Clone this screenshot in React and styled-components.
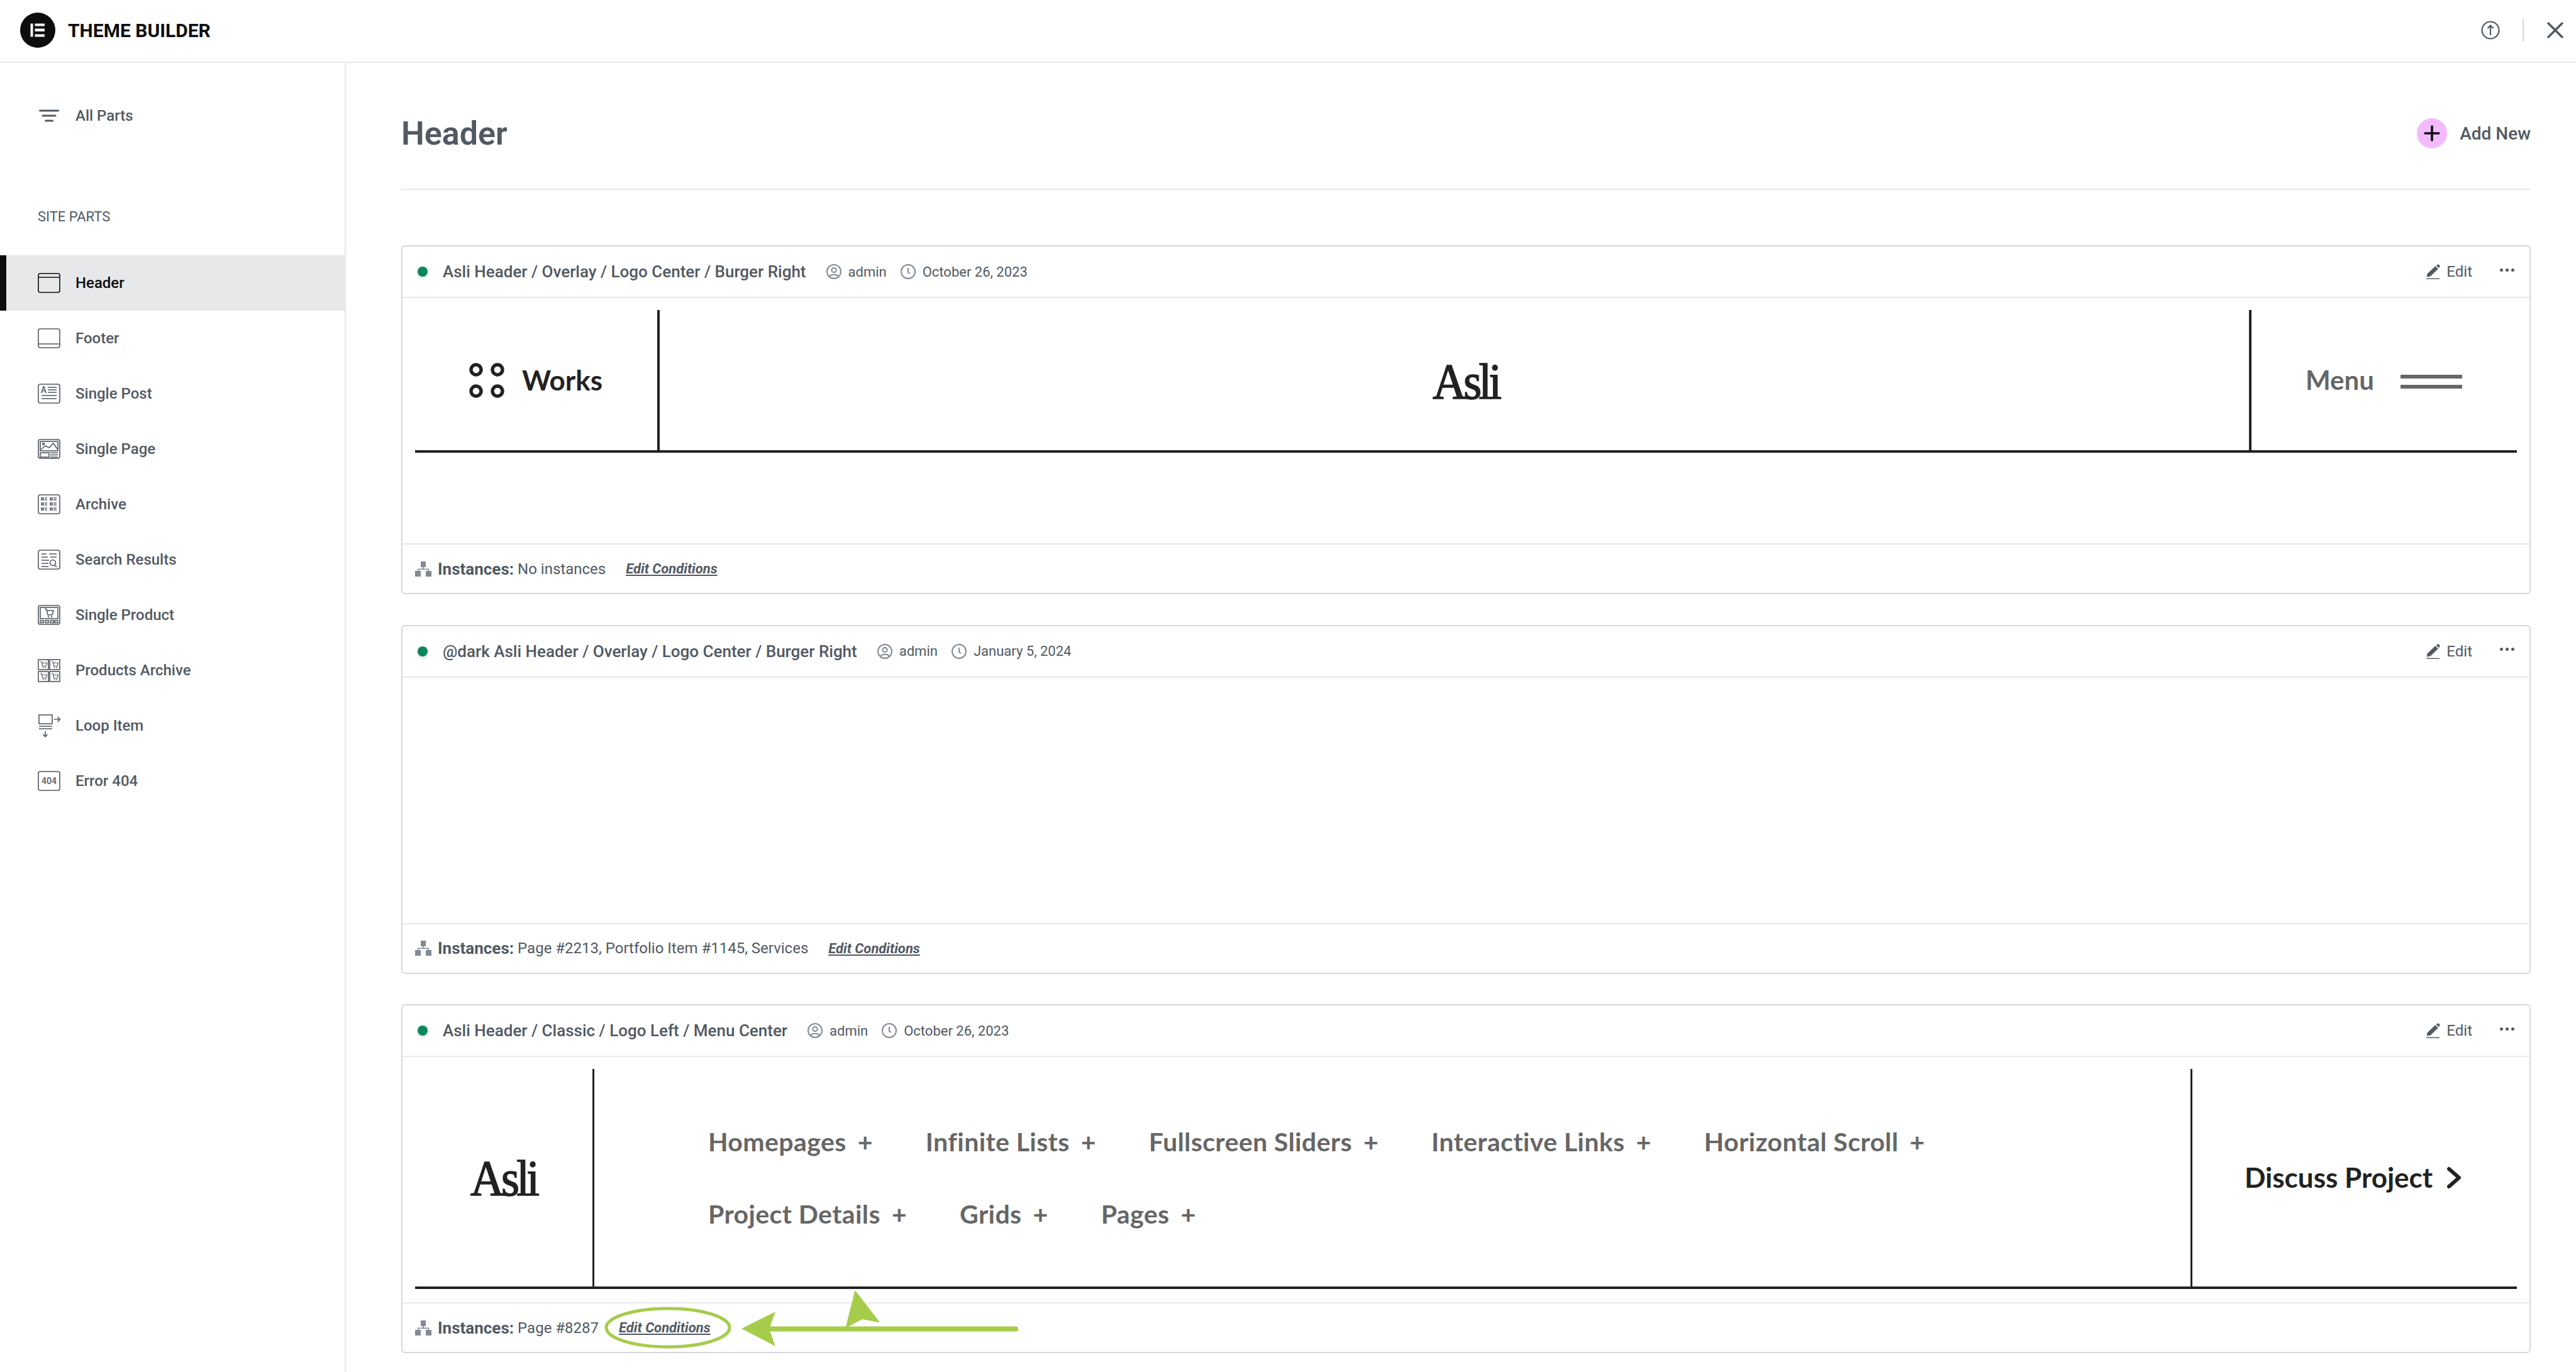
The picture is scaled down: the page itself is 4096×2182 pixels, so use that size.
import React from 'react'
import styled, { createGlobalStyle } from 'styled-components'

const GlobalStyle = createGlobalStyle`
  html, body {
    margin: 0;
    padding: 0;
    background: #fff;
    font-family: Roboto, "Liberation Sans", sans-serif;
    color: #515962;
  }
  * {
    box-sizing: border-box;
  }
`

// ICONS
const Box = () => <rect x="1" y="1" width="34" height="30" rx="3" fill="none" />

const Cart = ({ x, y, s = 1 }) => (
  <g transform={`translate(${x} ${y}) scale(${s})`} fill="none">
    <path d="M0 0 L3 1 L5 10 H12 L14 3 H3.5" />
    <circle cx="6" cy="13" r="0.5" />
    <circle cx="11" cy="13" r="0.5" />
  </g>
)

const SmallRow = ({ y }) => (
  <>
    <rect x="6" y={y} width="3" height="3" />
    <path d={`M11 ${y} h4 M11 ${y + 3} h4 M25 ${y} h5 M25 ${y + 3} h5`} />
    <rect x="20" y={y} width="3" height="3" />
  </>
)

const partIcons = {
  header: (
    <>
      <Box />
      <path d="M1 7 H35" />
    </>
  ),
  footer: (
    <>
      <Box />
      <path d="M1 25 H35" />
    </>
  ),
  post: (
    <>
      <Box />
      <text x="9.5" y="15" textAnchor="middle" fontSize="14" fontFamily="Roboto, sans-serif" fill="#515962" stroke="none">
        A
      </text>
      <path d="M16 6 H30 M16 10 H30 M16 14 H30 M6 19 H30 M6 24 H30" />
    </>
  ),
  page: (
    <>
      <Box />
      <rect x="4" y="4" width="28" height="15" />
      <circle cx="9" cy="8" r="1.5" />
      <path d="M5 17 L12 11 L18 14 L25 7 L31 16" />
      <rect x="4" y="22" width="14" height="7" />
      <path d="M20 22 H32 M20 25.5 H32 M20 29 H32" />
    </>
  ),
  archive: (
    <>
      <Box />
      <SmallRow y={6} />
      <SmallRow y={14} />
      <SmallRow y={22} />
    </>
  ),
  search: (
    <>
      <Box />
      <path d="M6 7 H14 M18 7 H30 M6 12 H16 M20 12 H30 M6 17 H18 M6 22 H17 M6 27 H17" />
      <circle cx="24" cy="21" r="4.5" />
      <path d="M27 24.5 L30 28" />
    </>
  ),
  product: (
    <>
      <Box />
      <rect x="4" y="4" width="28" height="18" />
      <Cart x={11} y={6} />
      <rect x="4" y="25" width="5" height="3.5" />
      <rect x="12" y="25" width="5" height="3.5" />
      <rect x="20" y="25" width="5" height="3.5" />
      <rect x="27" y="25" width="5" height="3.5" />
    </>
  ),
  products: (
    <>
      <rect x="1" y="1" width="16" height="16" fill="none" />
      <rect x="19" y="1" width="16" height="16" fill="none" />
      <rect x="1" y="20" width="16" height="16" fill="none" />
      <rect x="19" y="20" width="16" height="16" fill="none" />
      <Cart x={4} y={4} s={0.75} />
      <Cart x={22} y={4} s={0.75} />
      <Cart x={4} y={23} s={0.75} />
      <Cart x={22} y={23} s={0.75} />
    </>
  ),
  loop: (
    <>
      <rect x="2" y="1" width="21" height="14" fill="none" />
      <path d="M2 19 H23 M2 23 H23 M12 27 V35 M8.5 32 L12 35.5 L15.5 32 M26 8 H35 M31.5 4 L35.5 8 L31.5 12" />
    </>
  ),
  error: (
    <>
      <Box />
      <text x="18" y="21" textAnchor="middle" fontSize="14" fontFamily="Roboto, sans-serif" fill="#515962" stroke="none">
        404
      </text>
    </>
  ),
}

const PartIcon = ({ name }) => (
  <svg width="36" height={name === 'products' || name === 'loop' ? 37 : 32} viewBox={name === 'products' || name === 'loop' ? '0 0 36 37' : '0 0 36 32'} fill="none" stroke="currentColor" strokeWidth="1.6">
    {partIcons[name]}
  </svg>
)

const ElementorLogo = () => (
  <svg width="56" height="56" viewBox="0 0 56 56">
    <circle cx="28" cy="28" r="28" fill="#0c0d0e" />
    <path fill="#fff" d="M16.5 17.5 H20.5 V38.5 H16.5 Z M23.5 17.5 H39 V21.5 H23.5 Z M23.5 25.5 H39 V30 H23.5 Z M23.5 34.5 H39 V38.5 H23.5 Z" />
  </svg>
)

const FilterIcon = () => (
  <svg width="32" height="20" viewBox="0 0 32 20" fill="none" stroke="#515962" strokeWidth="3" strokeLinecap="round">
    <path d="M1.5 2 H30.5 M6 10 H26 M10.5 18 H21.5" />
  </svg>
)

const HelpIcon = () => (
  <svg width="30" height="30" viewBox="0 0 30 30" fill="none" stroke="#515962" strokeWidth="2.2">
    <circle cx="15" cy="15" r="13.5" />
    <path d="M15 23 V8 M10.5 12 L15 7.5 L19.5 12" />
  </svg>
)

const CloseIcon = () => (
  <svg width="28" height="28" viewBox="0 0 28 28" fill="none" stroke="#515962" strokeWidth="3.4" strokeLinecap="round">
    <path d="M3 3 L25 25 M25 3 L3 25" />
  </svg>
)

const PlusIcon = () => (
  <svg width="26" height="26" viewBox="0 0 26 26" fill="none" stroke="#0c0d0e" strokeWidth="3.6" strokeLinecap="round">
    <path d="M13 2 V24 M2 13 H24" />
  </svg>
)

const UserIcon = () => (
  <svg width="24" height="24" viewBox="0 0 24 24" fill="none" stroke="#818a96" strokeWidth="2">
    <circle cx="12" cy="12" r="11" />
    <circle cx="12" cy="9.5" r="3.6" />
    <path d="M5 20 C6.5 15.5 17.5 15.5 19 20" />
  </svg>
)

const ClockIcon = () => (
  <svg width="24" height="24" viewBox="0 0 24 24" fill="none" stroke="#818a96" strokeWidth="2">
    <circle cx="12" cy="12" r="11" />
    <path d="M12 6 V13 L15 15" />
  </svg>
)

const PencilIcon = () => (
  <svg width="22" height="24" viewBox="0 0 22 24" fill="#515962">
    <path d="M15.5 2 L19 0.6 C20 0.4 21.8 2.2 21.5 3.4 L20 6.5 Z M14.3 3.2 L18.8 7.7 L6.5 19.6 L0.8 20.4 L1.4 15.6 Z" />
    <rect x="0" y="22.6" width="21" height="1.4" />
  </svg>
)

const HierarchyIcon = () => (
  <svg width="26" height="24" viewBox="0 0 26 24" fill="#818a96">
    <rect x="9" y="0" width="8" height="9" />
    <rect x="0" y="15" width="9" height="9" />
    <rect x="17" y="15" width="9" height="9" />
    <path d="M12.2 9 H13.8 V11.5 H22 V15 H20.5 V13 H5.5 V15 H4 V11.5 H12.2 Z" />
  </svg>
)

const RingsIcon = () => (
  <svg width="56" height="56" viewBox="0 0 56 56" fill="none" stroke="#222" strokeWidth="5.4">
    <circle cx="11" cy="11" r="8" />
    <circle cx="45" cy="11" r="8" />
    <circle cx="11" cy="45" r="8" />
    <circle cx="45" cy="45" r="8" />
  </svg>
)

const ChevronIcon = () => (
  <svg width="24" height="34" viewBox="0 0 24 34" fill="none" stroke="#222" strokeWidth="6" strokeLinecap="round" strokeLinejoin="round">
    <path d="M4 3 L20 17 L4 31" />
  </svg>
)

// LAYOUT
const Page = styled.div`
  width: 4096px;
  height: 2182px;
  overflow: hidden;
  display: flex;
  flex-direction: column;
`

const TopBar = styled.header`
  height: 100px;
  flex: none;
  display: flex;
  align-items: center;
  padding: 0 19px 2px 32px;
  border-bottom: 2px solid #e6e8ea;
`

const AppTitle = styled.h1`
  margin: 0 0 0 20px;
  font-size: 30px;
  font-weight: 700;
  color: #0c0d0e;
  text-transform: uppercase;
`

const TopActions = styled.div`
  margin-left: auto;
  display: flex;
  align-items: center;
  gap: 21px;
`

const TopDivider = styled.span`
  width: 2px;
  height: 36px;
  margin: 0 15px 0 15px;
  background: #d5d8dc;
`

const Body = styled.div`
  flex: 1;
  display: flex;
`

const Sidebar = styled.aside`
  width: 550px;
  flex: none;
  padding-top: 60px;
  border-right: 2px solid #e6e8ea;
`

const AllParts = styled.div`
  height: 48px;
  padding-left: 62px;
  display: flex;
  align-items: center;
  gap: 26px;
  font-size: 24px;
  font-weight: 500;
`

const SectionLabel = styled.div`
  height: 30px;
  margin: 121px 0 47px;
  padding-left: 60px;
  display: flex;
  align-items: center;
  font-size: 22px;
`

const PartRow = styled.div`
  height: 88px;
  display: flex;
  align-items: center;
  gap: 24px;
  font-size: 24px;
  font-weight: 500;
  color: ${({ $active }) => ($active ? '#0c0d0e' : '#515962')};
  background: ${({ $active }) => ($active ? '#e6e8ea' : 'transparent')};
  border-left: ${({ $active }) => ($active ? '10px solid #0c0d0e' : '0 solid transparent')};
  padding-left: ${({ $active }) => ($active ? '50px' : '60px')};
`

const Main = styled.main`
  flex: 1;
  padding: 0 72px 0 88px;
`

const MainHead = styled.div`
  height: 202px;
  padding-top: 24px;
  display: flex;
  align-items: center;
  justify-content: space-between;
  border-bottom: 2px solid #e6e8ea;
  margin-bottom: 88px;
`

const PageTitle = styled.h2`
  margin: 0;
  font-size: 52px;
  font-weight: 600;
`

const AddNew = styled.div`
  display: flex;
  align-items: center;
  gap: 20px;
  font-size: 28px;
  font-weight: 500;
`

const PlusCircle = styled.span`
  width: 48px;
  height: 48px;
  border-radius: 50%;
  background: #f3bafd;
  display: flex;
  align-items: center;
  justify-content: center;
`

const Card = styled.section`
  position: relative;
  height: 555px;
  margin-bottom: 48.5px;
  border: 2px solid #d5d8dc;
  border-radius: 6px;
  display: flex;
  flex-direction: column;
`

const CardHead = styled.div`
  height: 82px;
  flex: none;
  padding: 0 24px 0 24px;
  display: flex;
  align-items: center;
  border-bottom: 2px solid #e6e8ea;
`

const StatusDot = styled.span`
  width: 16px;
  height: 16px;
  margin-right: 24px;
  border-radius: 50%;
  background: #0a875a;
  box-shadow: 0 2px 6px rgba(0, 0, 0, 0.15);
`

const CardTitle = styled.span`
  font-size: 26px;
  font-weight: 500;
  margin-right: 32px;
`

const Meta = styled.span`
  display: flex;
  align-items: center;
  gap: 11px;
  margin-right: 22px;
  font-size: 22px;
`

const CardActions = styled.div`
  margin-left: auto;
  display: flex;
  align-items: center;
`

const EditLink = styled.span`
  display: flex;
  align-items: center;
  gap: 10px;
  font-size: 24px;
  margin-right: 44px;
`

const Dots = styled.span`
  display: flex;
  gap: 4px;
  margin-bottom: 6px;
`

const Dot = styled.i`
  width: 5px;
  height: 5px;
  border-radius: 50%;
  background: #515962;
`

const Preview = styled.div`
  height: 390px;
  flex: none;
  padding: 19px 20px 0;
`

const Mock = styled.div`
  height: ${({ $height }) => $height}px;
  display: flex;
  border-bottom: 4px solid #222;
`

const MockCell = styled.div`
  width: ${({ $width }) => ($width ? `${$width}px` : 'auto')};
  flex: ${({ $width }) => ($width ? 'none' : '1')};
  display: flex;
  align-items: center;
  justify-content: ${({ $justify }) => $justify || 'center'};
  padding-left: ${({ $left }) => $left || 0}px;
  gap: ${({ $gap }) => $gap || 0}px;
  border-right: ${({ $line }) => ($line ? `${$line}px solid #222` : 'none')};
  border-left: ${({ $lineLeft }) => ($lineLeft ? `${$lineLeft}px solid #222` : 'none')};
`

const MockText = styled.span`
  font-family: Lato, "Open Sans", sans-serif;
  font-size: ${({ $size }) => $size || 44}px;
  font-weight: 700;
  color: ${({ $color }) => $color || '#222'};
  margin-top: -2px;
`

const LogoText = styled.span`
  font-family: "Liberation Serif", serif;
  font-size: 80px;
  letter-spacing: -5px;
  color: #222;
  -webkit-text-stroke: 1.6px #222;
  transform: scaleX(0.93);
  margin-left: ${({ $left }) => $left || 0}px;
  margin-top: ${({ $top }) => $top || 0}px;
`

const Burger = styled.span`
  width: 98px;
  height: 22px;
  margin-top: 4px;
  border-top: 6px solid #666;
  border-bottom: 6px solid #666;
`

const NavWrap = styled.div`
  flex: 1;
  padding-left: 181px;
  display: flex;
  flex-direction: column;
  justify-content: center;
  gap: 53px;
`

const NavRow = styled.div`
  display: flex;
  gap: 84px;
`

const NavItem = styled.span`
  display: flex;
  align-items: center;
  gap: 18px;
  height: 62px;
  font-family: Lato, "Open Sans", sans-serif;
  font-size: 41px;
  font-weight: 700;
  letter-spacing: 0.4px;
  color: #666;
`

const Footer = styled.div`
  flex: 1;
  padding: 0 20px;
  display: flex;
  align-items: center;
  border-top: 2px solid #e6e8ea;
  font-size: 24px;
`

const InstancesLabel = styled.strong`
  margin: 0 6px 0 10px;
  font-size: 26px;
  font-weight: 700;
`

const EditConditions = styled.span`
  margin-left: ${({ $left }) => $left}px;
  font-size: 22px;
  font-weight: 700;
  font-style: italic;
  text-decoration: underline;
`

// the green marks drawn over the third card
const Annotation = styled.svg`
  position: absolute;
  left: 0;
  top: 440px;
  overflow: visible;
  pointer-events: none;
`

const parts = [
  ['header', 'Header'],
  ['footer', 'Footer'],
  ['post', 'Single Post'],
  ['page', 'Single Page'],
  ['archive', 'Archive'],
  ['search', 'Search Results'],
  ['product', 'Single Product'],
  ['products', 'Products Archive'],
  ['loop', 'Loop Item'],
  ['error', 'Error 404'],
]

const navRows = [
  ['Homepages', 'Infinite Lists', 'Fullscreen Sliders', 'Interactive Links', 'Horizontal Scroll'],
  ['Project Details', 'Grids', 'Pages'],
]

const PartCard = ({ title, date, instances, editLeft, children, overlay }) => (
  <Card>
    <CardHead>
      <StatusDot />
      <CardTitle>{title}</CardTitle>
      <Meta>
        <UserIcon />
        admin
      </Meta>
      <Meta>
        <ClockIcon />
        {date}
      </Meta>
      <CardActions>
        <EditLink>
          <PencilIcon />
          Edit
        </EditLink>
        <Dots>
          <Dot />
          <Dot />
          <Dot />
        </Dots>
      </CardActions>
    </CardHead>
    <Preview>{children}</Preview>
    <Footer>
      <HierarchyIcon />
      <InstancesLabel>Instances:</InstancesLabel>
      {instances}
      <EditConditions $left={editLeft}>Edit Conditions</EditConditions>
    </Footer>
    {overlay}
  </Card>
)

const App = () => (
  <Page>
    <GlobalStyle />
    <TopBar>
      <ElementorLogo />
      <AppTitle>Theme Builder</AppTitle>
      <TopActions>
        <HelpIcon />
        <TopDivider />
        <CloseIcon />
      </TopActions>
    </TopBar>
    <Body>
      <Sidebar>
        <AllParts>
          <FilterIcon />
          All Parts
        </AllParts>
        <SectionLabel>SITE PARTS</SectionLabel>
        {parts.map(([icon, label]) => (
          <PartRow key={icon} $active={icon === 'header'}>
            <PartIcon name={icon} />
            {label}
          </PartRow>
        ))}
      </Sidebar>
      <Main>
        <MainHead>
          <PageTitle>Header</PageTitle>
          <AddNew>
            <PlusCircle>
              <PlusIcon />
            </PlusCircle>
            Add New
          </AddNew>
        </MainHead>

        <PartCard
          title="Asli Header / Overlay / Logo Center / Burger Right"
          date="October 26, 2023"
          instances="No instances"
          editLeft={32}
        >
          <Mock $height={227}>
            <MockCell $width={389} $line={4} $justify="flex-start" $left={86} $gap={28}>
              <RingsIcon />
              <MockText>Works</MockText>
            </MockCell>
            <MockCell>
              <LogoText $top={6} $left={36}>Asli</LogoText>
            </MockCell>
            <MockCell $width={426} $lineLeft={4} $justify="flex-start" $left={86} $gap={42}>
              <MockText $color="#666" $size={42}>Menu</MockText>
              <Burger />
            </MockCell>
          </Mock>
        </PartCard>

        <PartCard
          title="@dark Asli Header / Overlay / Logo Center / Burger Right"
          date="January 5, 2024"
          instances="Page #2213, Portfolio Item #1145, Services"
          editLeft={32}
        />

        <PartCard
          title="Asli Header / Classic / Logo Left / Menu Center"
          date="October 26, 2023"
          instances="Page #8287"
          editLeft={32}
          overlay={
            <Annotation width="1000" height="120" viewBox="0 0 1000 120">
              <ellipse cx="422" cy="72.5" rx="98" ry="30.5" fill="none" stroke="#a6cc4b" strokeWidth="5" />
              <path d="M583 74.5 H975" fill="none" stroke="#a6cc4b" strokeWidth="8" strokeLinecap="round" />
              <path d="M539 74 L593 47 L583 74.5 L593 102 Z" fill="#a6cc4b" />
              <path d="M720 15 L706 71 L731 58 L757 63 Z" fill="#a6cc4b" stroke="#a6cc4b" strokeWidth="2" strokeLinejoin="round" />
            </Annotation>
          }
        >
          <Mock $height={350}>
            <MockCell $width={285} $line={3}>
              <LogoText $top={2}>Asli</LogoText>
            </MockCell>
            <NavWrap>
              {navRows.map((row, i) => (
                <NavRow key={i}>
                  {row.map(item => (
                    <NavItem key={item}>
                      {item}
                      <span>+</span>
                    </NavItem>
                  ))}
                </NavRow>
              ))}
            </NavWrap>
            <MockCell $width={519} $lineLeft={3} $justify="flex-start" $left={83} $gap={22}>
              <MockText>Discuss Project</MockText>
              <ChevronIcon />
            </MockCell>
          </Mock>
        </PartCard>
      </Main>
    </Body>
  </Page>
)

export default App
